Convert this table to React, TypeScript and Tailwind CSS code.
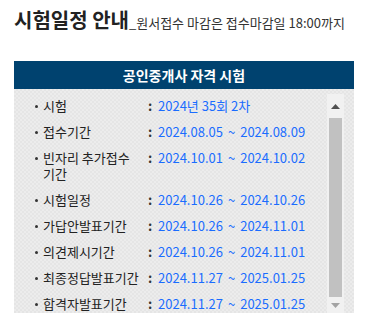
import React from "react";

type Row = { label: string; from: string; to?: string };

const rows: Row[] = [
  { label: "시험", from: "2024년 35회 2차" },
  { label: "접수기간", from: "2024.08.05", to: "2024.08.09" },
  { label: "빈자리 추가접수 기간", from: "2024.10.01", to: "2024.10.02" },
  { label: "시험일정", from: "2024.10.26", to: "2024.10.26" },
  { label: "가답안발표기간", from: "2024.10.26", to: "2024.11.01" },
  { label: "의견제시기간", from: "2024.10.26", to: "2024.11.01" },
  { label: "최종정답발표기간", from: "2024.11.27", to: "2025.01.25" },
  { label: "합격자발표기간", from: "2024.11.27", to: "2025.01.25" },
];

const font = { fontFamily: '"Noto Sans CJK KR", "Noto Sans", sans-serif' };

function Scrollbar() {
  return (
    <div className="mt-[5px] flex h-[220px] w-[17px] shrink-0 flex-col items-center bg-[#f1f1f1]">
      <div className="flex h-[24px] w-full items-center justify-center">
        <svg width="9" height="5" viewBox="0 0 9 5">
          <path d="M0 5 L4.5 0 L9 5 Z" fill="#505050" />
        </svg>
      </div>
      <div className="h-[179px] w-[13px] bg-[#c1c1c1]" />
      <div className="flex h-[17px] w-full items-center justify-center">
        <svg width="9" height="5" viewBox="0 0 9 5">
          <path d="M0 0 L9 0 L4.5 5 Z" fill="#a3a3a3" />
        </svg>
      </div>
    </div>
  );
}

export default function App() {
  return (
    <div className="h-[313px] w-[368px] overflow-hidden bg-white px-[14px]" style={font}>
      <div className="flex items-baseline pt-[6px] leading-[28px]">
        <span className="text-[20px] font-bold text-[#222]">시험일정 안내</span>
        <span className="text-[13px] text-[#333]">_원서접수 마감은 접수마감일 18:00까지</span>
      </div>

      <div className="mt-[24px]">
        <div className="flex h-[28px] items-center justify-center bg-[#00426f] text-[14px] font-bold text-white">
          공인중개사 자격 시험
        </div>
        <div className="flex h-[240px] bg-[#e9e9e9] bg-[repeating-conic-gradient(#e5e5e5_0_25%,#ececec_0_50%)] bg-[length:4px_4px] pr-[10px]">
          <div className="flex-1 pl-[21px] pt-[4px]">
            {rows.map((r) => (
              <div
                key={r.label}
                className="grid grid-cols-[8px_105px_10px_1fr] py-[5px] leading-[16px]"
              >
                <div className="flex h-[16px] items-center">
                  <div className="h-[3px] w-[3px] rounded-full bg-[#333]" />
                </div>
                <div className="break-keep text-[13px] text-[#222]">{r.label}</div>
                <div className="text-[13px] font-bold text-[#333]">:</div>
                <div className="flex whitespace-nowrap text-[13px] text-[#1a6cff]">
                  <span>{r.from}</span>
                  {r.to && (
                    <>
                      <span className="mx-[5px]">~</span>
                      <span>{r.to}</span>
                    </>
                  )}
                </div>
              </div>
            ))}
          </div>
          <Scrollbar />
        </div>
      </div>
    </div>
  );
}
